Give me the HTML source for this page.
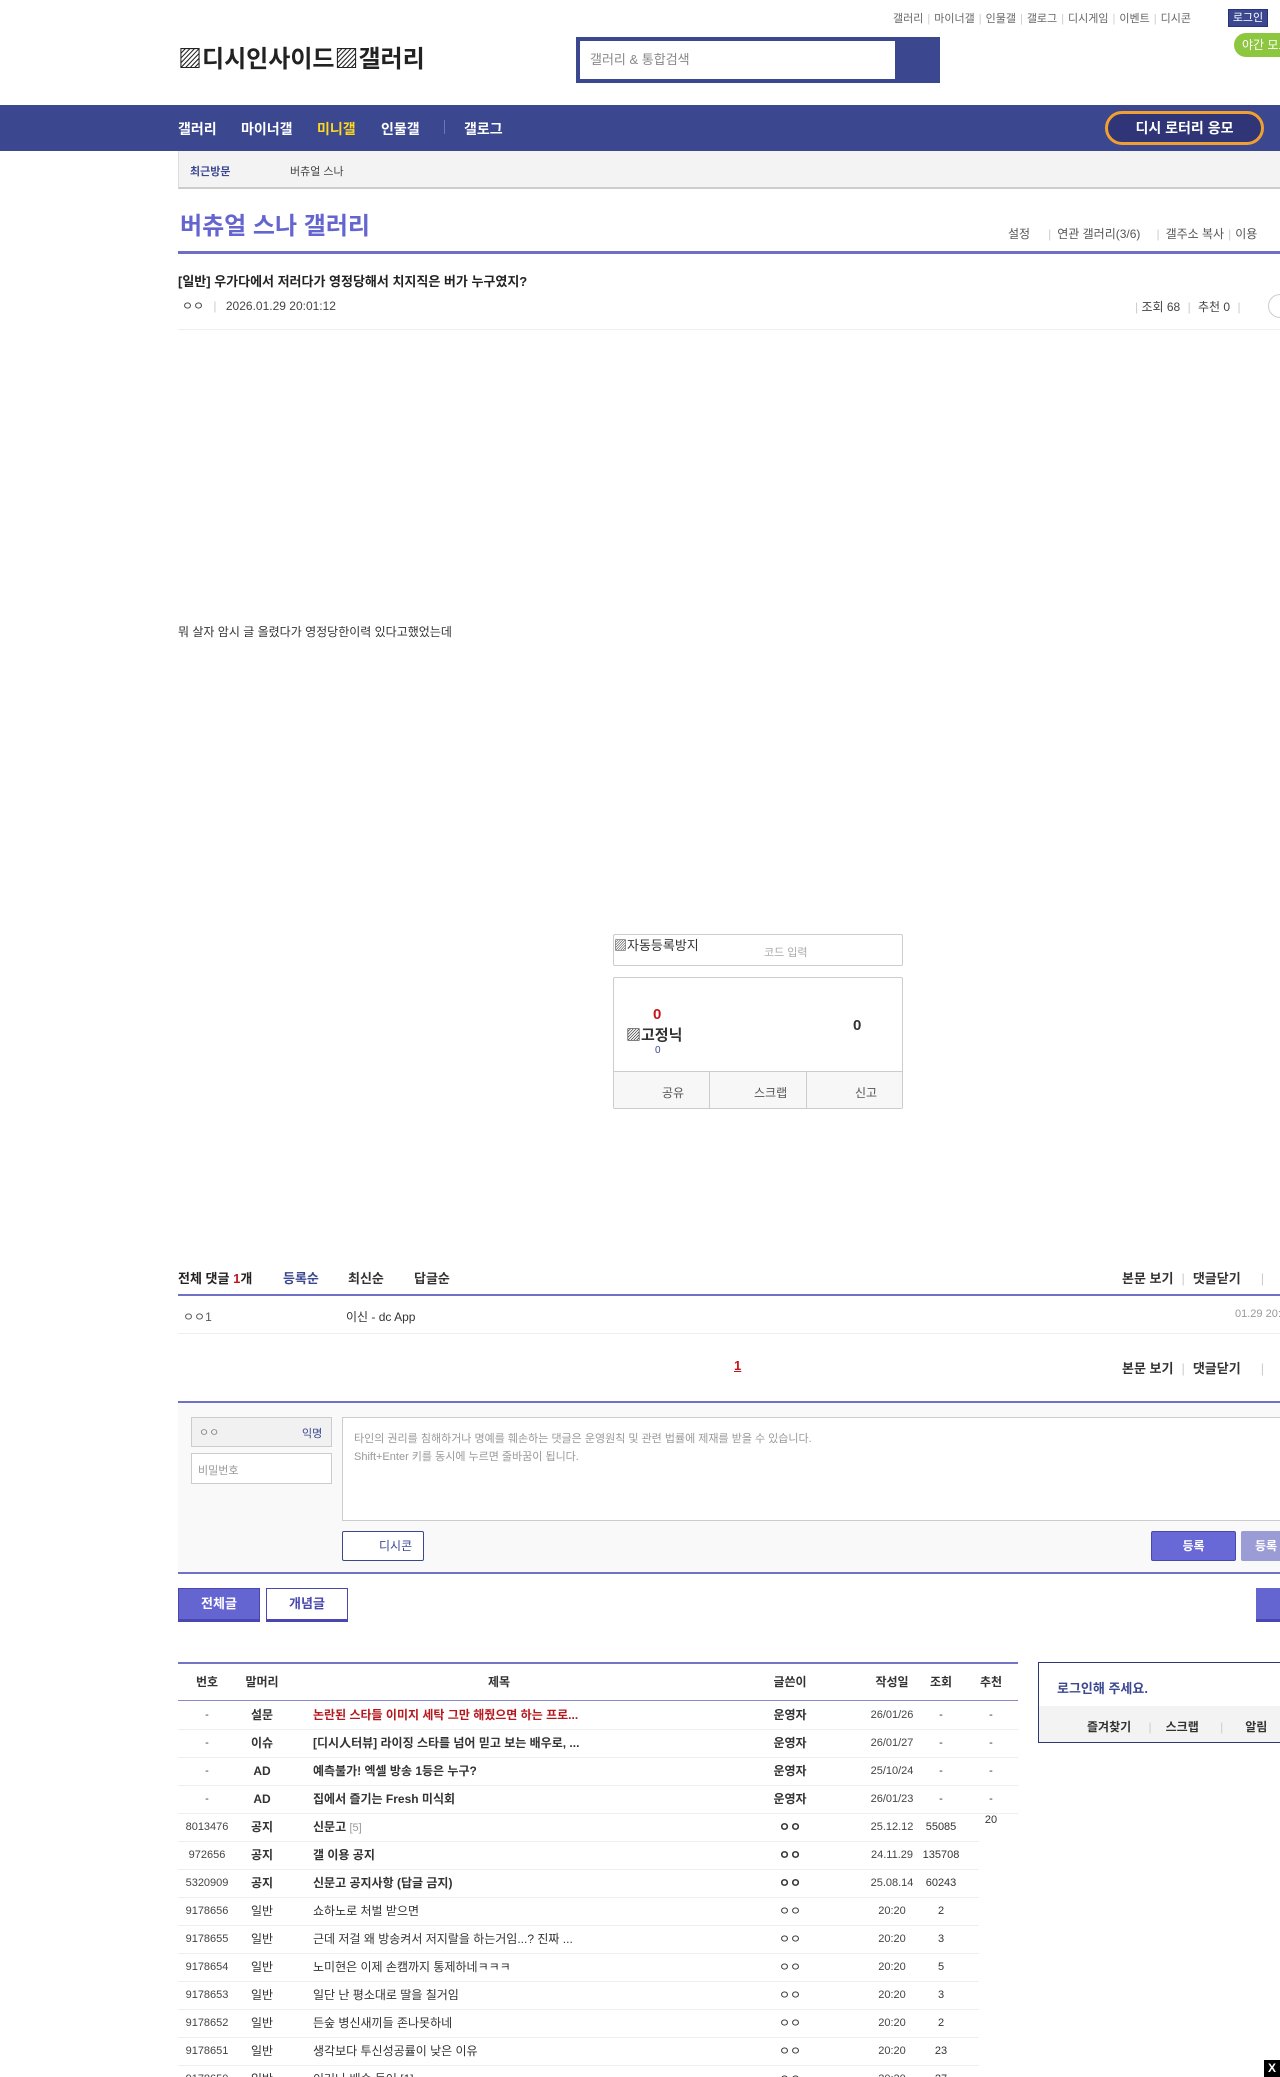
<!DOCTYPE html>
<html><head><meta charset="utf-8"><style>
*{margin:0;padding:0;box-sizing:border-box}
html,body{width:1280px;height:2077px;overflow:hidden;background:#fff}
body{position:relative;font-family:"Liberation Sans","Noto Sans CJK KR",sans-serif;font-size:12px;color:#333}
.a{position:absolute;white-space:nowrap}
.hl{position:absolute;height:1px;background:#eee}
.pl{position:absolute;height:2px;background:#7070c8}
.nav span{position:absolute;top:119px;color:#fff;font-size:14px;font-weight:bold}
.row{position:absolute;left:178px;height:28px;font-size:12px;width:840px}
.row div{position:absolute;top:0;line-height:28px;white-space:nowrap}
.c1{left:0;width:58px;text-align:center;font-size:11px;color:#444}
.c2{left:64px;width:40px;text-align:center;font-weight:bold}
.c3{left:135px}
.c4{left:582px;width:60px;text-align:center;font-weight:bold}
.c5{left:686px;width:56px;text-align:center;font-size:11px;color:#444}
.c6{left:743px;width:40px;text-align:center;font-size:11px}
.c7{left:793px;width:40px;text-align:center;font-size:11px}
.sp{color:#ccc;margin:0 4px}
</style></head><body>
<div class="a" style="top:10px;left:893px;font-size:11px;color:#666">갤러리<span class="sp">|</span>마이너갤<span class="sp">|</span>인물갤<span class="sp">|</span>갤로그<span class="sp">|</span>디시게임<span class="sp">|</span>이벤트<span class="sp">|</span>디시콘</div>
<div class="a" style="top:9px;left:1228px;width:40px;height:18px;background:#3b4890;border:1px solid #29327a;color:#fff;font-size:11px;text-align:center;line-height:16px">로그인</div>
<div class="a" style="top:33px;left:1234px;width:60px;height:24px;background:#8dc63f;border-radius:12px;color:#fff;font-size:12px;line-height:24px;padding-left:8px">야간 모드</div>
<div class="a" style="top:39px;left:178px;font-size:24px;font-weight:bold;color:#222">▨디시인사이드▨갤러리</div>
<div class="a" style="top:37px;left:576px;width:364px;height:46px;background:#3b4890"></div>
<div class="a" style="top:41px;left:580px;width:315px;height:38px;background:#fff;color:#888;font-size:13px;line-height:38px;padding-left:10px">갤러리 &amp; 통합검색</div>
<div class="a" style="top:105px;left:0;width:1280px;height:46px;background:#3b4890"></div>
<div class="nav"><span style="left:178px">갤러리</span><span style="left:241px">마이너갤</span><span style="left:317px;color:#ffd81e">미니갤</span><span style="left:381px">인물갤</span><span style="left:464px">갤로그</span></div>
<div class="a" style="top:120px;left:444px;width:1px;height:14px;background:#6e78b0"></div>
<div class="a" style="top:111px;left:1105px;width:159px;height:34px;background:#2f3577;border:3px solid #f0a030;border-radius:17px;color:#fff;font-size:14px;font-weight:bold;text-align:center;line-height:28px">디시 로터리 응모</div>
<div class="a" style="top:151px;left:178px;width:1102px;height:38px;background:#f3f3f3;border-left:1px solid #ddd;border-bottom:2px solid #ccc"></div>
<div class="a" style="top:163px;left:190px;font-size:11px;font-weight:bold;color:#3b4890">최근방문</div>
<div class="a" style="top:163px;left:290px;font-size:11px;color:#444">버츄얼 스나</div>
<div class="a" style="top:206px;left:180px;font-size:24px;font-weight:bold;color:#6565d0">버츄얼 스나 갤러리</div>
<div class="a" style="top:225px;left:1008px;font-size:12px;color:#555">설정<span class="sp" style="margin:0 6px 0 18px">|</span>연관 갤러리(3/6)<span class="sp" style="margin:0 6px 0 16px">|</span>갤주소 복사<span class="sp">|</span>이용</div>
<div class="pl" style="top:251px;left:178px;width:1102px;height:3px;background:#6e6ec4"></div>
<div class="a" style="top:271px;left:178px;font-size:13px;font-weight:bold;color:#222">[일반] 우가다에서 저러다가 영정당해서 치지직은 버가 누구였지?</div>
<div class="a" style="top:297px;left:182px;font-size:12px;color:#444">ㅇㅇ <span style="color:#ccc;margin:0 6px">|</span> 2026.01.29 20:01:12</div>
<div class="a" style="top:298px;left:1135px;font-size:12px;color:#444"><span style="color:#ccc">|</span> 조회 68 <span class="sp">|</span> 추천 0 <span class="sp">|</span></div>
<div class="a" style="top:294px;left:1268px;width:24px;height:24px;border:1px solid #ccc;border-radius:12px"></div>
<div class="hl" style="top:329px;left:178px;width:1102px"></div>
<div class="a" style="top:623px;left:178px;font-size:12px;color:#333">뭐 살자 암시 글 올렸다가 영정당한이력 있다고했었는데</div>
<div class="a" style="top:934px;left:613px;width:290px;height:32px;border:1px solid #ccc;border-radius:2px"></div>
<div class="a" style="top:935px;left:614px;font-size:13px;color:#333">▨자동등록방지</div>
<div class="a" style="top:944px;left:764px;font-size:11px;color:#aaa">코드 입력</div>
<div class="a" style="top:977px;left:613px;width:290px;height:132px;border:1px solid #ccc;border-radius:2px"></div>
<div class="a" style="top:1071px;left:614px;width:288px;height:37px;background:#f7f7f7;border-top:1px solid #ccc"></div>
<div class="a" style="top:1071px;left:709px;width:1px;height:37px;background:#ccc"></div>
<div class="a" style="top:1071px;left:806px;width:1px;height:37px;background:#ccc"></div>
<div class="a" style="top:1006px;left:653px;font-size:15px;font-weight:bold;color:#c4161c">0</div>
<div class="a" style="top:1024px;left:626px;font-size:15px;font-weight:bold;color:#333">▨고정닉</div>
<div class="a" style="top:1045px;left:655px;font-size:10px;color:#3b4890">0</div>
<div class="a" style="top:1017px;left:853px;font-size:15px;font-weight:bold;color:#333">0</div>
<div class="a" style="top:1084px;left:662px;font-size:12px;color:#555">공유</div>
<div class="a" style="top:1084px;left:754px;font-size:12px;color:#555">스크랩</div>
<div class="a" style="top:1084px;left:855px;font-size:12px;color:#555">신고</div>
<div class="a" style="top:1268px;left:178px;font-size:13px;font-weight:bold;color:#222">전체 댓글 <span style="color:#c4161c">1</span>개</div>
<div class="a" style="top:1268px;left:283px;font-size:13px;font-weight:bold;color:#3b4890">등록순</div>
<div class="a" style="top:1268px;left:348px;font-size:13px;font-weight:bold;color:#333">최신순</div>
<div class="a" style="top:1268px;left:414px;font-size:13px;font-weight:bold;color:#333">답글순</div>
<div class="a" style="top:1268px;left:1122px;font-size:13px;font-weight:bold;color:#333">본문 보기<span class="sp" style="font-weight:normal;margin:0 8px">|</span>댓글닫기<span class="sp" style="font-weight:normal;margin-left:20px">|</span></div>
<div class="pl" style="top:1294px;left:178px;width:1102px"></div>
<div class="a" style="top:1308px;left:183px;font-size:12px;color:#555">ㅇㅇ1</div>
<div class="a" style="top:1308px;left:346px;font-size:12px;color:#333">이신 - dc App</div>
<div class="a" style="top:1308px;left:1235px;font-size:11px;color:#999">01.29 20:</div>
<div class="hl" style="top:1333px;left:178px;width:1102px"></div>
<div class="a" style="top:1358px;left:734px;font-size:13px;font-weight:bold;color:#c4161c;text-decoration:underline">1</div>
<div class="a" style="top:1358px;left:1122px;font-size:13px;font-weight:bold;color:#333">본문 보기<span class="sp" style="font-weight:normal;margin:0 8px">|</span>댓글닫기<span class="sp" style="font-weight:normal;margin-left:20px">|</span></div>
<div class="pl" style="top:1401px;left:178px;width:1102px"></div>
<div class="a" style="top:1403px;left:178px;width:1102px;height:170px;background:#f9f9f9"></div>
<div class="pl" style="top:1572px;left:178px;width:1102px"></div>
<div class="a" style="top:1417px;left:191px;width:141px;height:30px;background:#f1f1f1;border:1px solid #ccc"></div>
<div class="a" style="top:1424px;left:199px;font-size:11px;color:#888">ㅇㅇ</div>
<div class="a" style="top:1425px;left:302px;font-size:11px;color:#3b4890">익명</div>
<div class="a" style="top:1453px;left:191px;width:141px;height:31px;background:#fff;border:1px solid #ccc"></div>
<div class="a" style="top:1462px;left:198px;font-size:11px;color:#999">비밀번호</div>
<div class="a" style="top:1417px;left:342px;width:950px;height:104px;background:#fff;border:1px solid #ccc"></div>
<div class="a" style="top:1430px;left:354px;font-size:11px;color:#999;line-height:18px">타인의 권리를 침해하거나 명예를 훼손하는 댓글은 운영원칙 및 관련 법률에 제재를 받을 수 있습니다.<br>Shift+Enter 키를 동시에 누르면 줄바꿈이 됩니다.</div>
<div class="a" style="top:1531px;left:342px;width:82px;height:30px;background:#fff;border:1px solid #3b4890;border-radius:2px;color:#3b4890;font-size:12px;line-height:28px;padding-left:36px">디시콘</div>
<div class="a" style="top:1531px;left:1151px;width:85px;height:30px;background:#6868d6;border:1px solid #4848b0;border-radius:2px;color:#fff;font-size:12px;font-weight:bold;text-align:center;line-height:28px">등록</div>
<div class="a" style="top:1531px;left:1241px;width:60px;height:30px;background:#9b9bd6;border-radius:2px;color:#fff;font-size:12px;font-weight:bold;line-height:30px;padding-left:14px">등록</div>
<div class="a" style="top:1588px;left:178px;width:82px;height:34px;background:#6565d2;border:1px solid #4848b0;border-bottom:3px solid #4848b0;color:#fff;font-size:13px;font-weight:bold;text-align:center;line-height:30px">전체글</div>
<div class="a" style="top:1588px;left:266px;width:82px;height:34px;background:#fff;border:1px solid #4848b0;border-bottom:3px solid #4848b0;color:#4848b0;font-size:13px;font-weight:bold;text-align:center;line-height:30px">개념글</div>
<div class="a" style="top:1588px;left:1256px;width:40px;height:34px;background:#6565d2;border-bottom:3px solid #4848b0"></div>
<div class="pl" style="top:1662px;left:178px;width:840px;height:2px;background:#7575c8"></div>
<div class="row" style="top:1668px;font-weight:bold">
<div class="c1" style="font-size:12px;color:#333;font-weight:bold">번호</div><div class="c2">말머리</div><div style="left:310px;font-weight:bold">제목</div><div class="c4">글쓴이</div><div class="c5" style="font-size:12px;color:#333;font-weight:bold">작성일</div><div class="c6" style="font-size:12px;font-weight:bold">조회</div><div class="c7" style="font-size:12px;font-weight:bold">추천</div>
</div>
<div class="hl" style="top:1700px;left:178px;width:840px;background:#8a8ac8"></div>
<div class="row" style="top:1701px"><div class="c1">-</div><div class="c2">설문</div><div class="c3" style="color:#b5171c;font-weight:bold">논란된 스타들 이미지 세탁 그만 해줬으면 하는 프로...</div><div class="c4">운영자</div><div class="c5">26/01/26</div><div class="c6">-</div><div class="c7">-</div></div>
<div class="hl" style="top:1729px;left:178px;width:840px"></div>
<div class="row" style="top:1729px"><div class="c1">-</div><div class="c2">이슈</div><div class="c3" style="font-weight:bold">[디시人터뷰] 라이징 스타를 넘어 믿고 보는 배우로, ...</div><div class="c4">운영자</div><div class="c5">26/01/27</div><div class="c6">-</div><div class="c7">-</div></div>
<div class="hl" style="top:1757px;left:178px;width:840px"></div>
<div class="row" style="top:1757px"><div class="c1">-</div><div class="c2">AD</div><div class="c3" style="font-weight:bold">예측불가! 엑셀 방송 1등은 누구?</div><div class="c4">운영자</div><div class="c5">25/10/24</div><div class="c6">-</div><div class="c7">-</div></div>
<div class="hl" style="top:1785px;left:178px;width:840px"></div>
<div class="row" style="top:1785px"><div class="c1">-</div><div class="c2">AD</div><div class="c3" style="font-weight:bold">집에서 즐기는 Fresh 미식회</div><div class="c4">운영자</div><div class="c5">26/01/23</div><div class="c6">-</div><div class="c7">-</div></div>
<div class="hl" style="top:1813px;left:178px;width:840px"></div>
<div class="row" style="top:1813px"><div class="c1">8013476</div><div class="c2">공지</div><div class="c3" style="font-weight:bold">신문고 <span style="color:#999;font-weight:normal;font-size:11px">[5]</span></div><div class="c4">ㅇㅇ</div><div class="c5">25.12.12</div><div class="c6">55085</div><div class="c7" style="line-height:14px">20</div></div>
<div class="hl" style="top:1841px;left:178px;width:801px"></div>
<div class="row" style="top:1841px"><div class="c1">972656</div><div class="c2">공지</div><div class="c3" style="font-weight:bold">갤 이용 공지</div><div class="c4">ㅇㅇ</div><div class="c5">24.11.29</div><div class="c6">135708</div></div>
<div class="hl" style="top:1869px;left:178px;width:801px"></div>
<div class="row" style="top:1869px"><div class="c1">5320909</div><div class="c2">공지</div><div class="c3" style="font-weight:bold">신문고 공지사항 (답글 금지)</div><div class="c4">ㅇㅇ</div><div class="c5">25.08.14</div><div class="c6">60243</div></div>
<div class="hl" style="top:1897px;left:178px;width:801px"></div>
<div class="row" style="top:1897px"><div class="c1">9178656</div><div class="c2" style="font-weight:normal">일반</div><div class="c3">쇼하노로 처벌 받으면</div><div class="c4" style="font-weight:normal">ㅇㅇ</div><div class="c5">20:20</div><div class="c6">2</div></div>
<div class="hl" style="top:1925px;left:178px;width:801px"></div>
<div class="row" style="top:1925px"><div class="c1">9178655</div><div class="c2" style="font-weight:normal">일반</div><div class="c3">근데 저걸 왜 방송켜서 저지랄을 하는거임...? 진짜 ...</div><div class="c4" style="font-weight:normal">ㅇㅇ</div><div class="c5">20:20</div><div class="c6">3</div></div>
<div class="hl" style="top:1953px;left:178px;width:801px"></div>
<div class="row" style="top:1953px"><div class="c1">9178654</div><div class="c2" style="font-weight:normal">일반</div><div class="c3">노미현은 이제 손캠까지 통제하네ㅋㅋㅋ</div><div class="c4" style="font-weight:normal">ㅇㅇ</div><div class="c5">20:20</div><div class="c6">5</div></div>
<div class="hl" style="top:1981px;left:178px;width:801px"></div>
<div class="row" style="top:1981px"><div class="c1">9178653</div><div class="c2" style="font-weight:normal">일반</div><div class="c3">일단 난 평소대로 딸을 칠거임</div><div class="c4" style="font-weight:normal">ㅇㅇ</div><div class="c5">20:20</div><div class="c6">3</div></div>
<div class="hl" style="top:2009px;left:178px;width:801px"></div>
<div class="row" style="top:2009px"><div class="c1">9178652</div><div class="c2" style="font-weight:normal">일반</div><div class="c3">든숲 병신새끼들 존나못하네</div><div class="c4" style="font-weight:normal">ㅇㅇ</div><div class="c5">20:20</div><div class="c6">2</div></div>
<div class="hl" style="top:2037px;left:178px;width:801px"></div>
<div class="row" style="top:2037px"><div class="c1">9178651</div><div class="c2" style="font-weight:normal">일반</div><div class="c3">생각보다 투신성공률이 낮은 이유</div><div class="c4" style="font-weight:normal">ㅇㅇ</div><div class="c5">20:20</div><div class="c6">23</div></div>
<div class="hl" style="top:2065px;left:178px;width:801px"></div>
<div class="row" style="top:2065px"><div class="c1">9178650</div><div class="c2" style="font-weight:normal">일반</div><div class="c3">이거나 배속 들어 [1]</div><div class="c4" style="font-weight:normal">ㅇㅇ</div><div class="c5">20:20</div><div class="c6">27</div></div>
<div class="a" style="top:1662px;left:1038px;width:260px;height:81px;border:1px solid #2f3577;background:#fff"></div>
<div class="a" style="top:1706px;left:1039px;width:260px;height:36px;background:#f3f3f3"></div>
<div class="a" style="top:1678px;left:1057px;font-size:13px;font-weight:bold;color:#3b4890">로그인해 주세요.</div>
<div class="a" style="top:1718px;left:1087px;font-size:12px;font-weight:bold;color:#333">즐겨찾기 <span style="color:#ccc;font-weight:normal;margin:0 14px">|</span>스크랩 <span style="color:#ccc;font-weight:normal;margin:0 22px 0 18px">|</span>알림</div>
<div class="a" style="top:2060px;left:1264px;width:16px;height:17px;background:#000;color:#fff;font-size:12px;font-weight:bold;text-align:center;line-height:17px">X</div>
</body></html>
